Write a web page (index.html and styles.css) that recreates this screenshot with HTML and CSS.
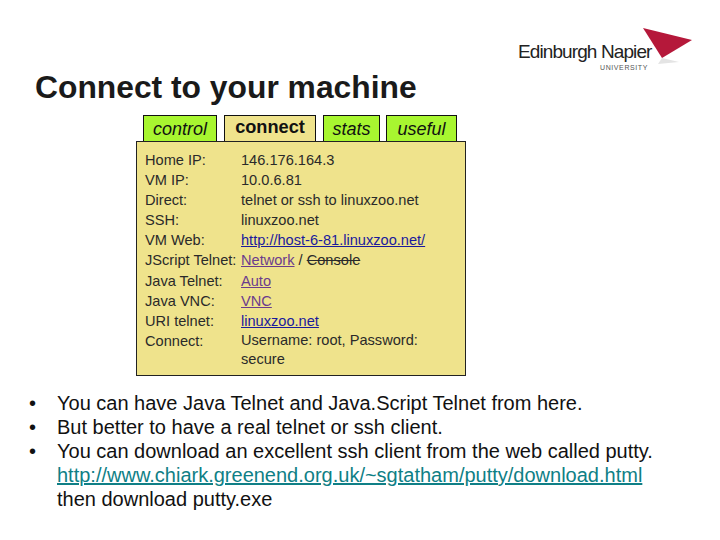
FILE: index.html
```html
<!DOCTYPE html>
<html lang="en">
<head>
<meta charset="utf-8">
<title>Connect to your machine</title>
<link rel="stylesheet" href="styles.css">
</head>
<body>
<div class="slide">
  <header class="head">
    <h1 class="title">Connect to your machine</h1>
    <div class="logo">
      <span class="logo-name">Edinburgh Napier</span>
      <span class="logo-uni">UNIVERSITY</span>
      <svg class="logo-mark" width="50" height="36" viewBox="0 0 50 36" aria-hidden="true">
        <path d="M19 30 L15 36 L36 34 Z" fill="#e4e4e4"/>
        <path d="M0 0 L49 12 L19 30 Z" fill="#b5183a"/>
      </svg>
    </div>
  </header>
  <section class="shot">
    <nav class="tabs">
      <span class="tab tab-control">control</span>
      <span class="tab tab-active">connect</span>
      <span class="tab tab-stats">stats</span>
      <span class="tab tab-useful">useful</span>
    </nav>
    <div class="panel">
      <span>Home IP:</span><span>146.176.164.3</span>
      <span>VM IP:</span><span>10.0.6.81</span>
      <span>Direct:</span><span>telnet or ssh to linuxzoo.net</span>
      <span>SSH:</span><span>linuxzoo.net</span>
      <span>VM Web:</span><span><a class="link" href="#">http://host-6-81.linuxzoo.net/</a></span>
      <span>JScript Telnet:</span><span><a class="visited" href="#">Network</a> / <s>Console</s></span>
      <span>Java Telnet:</span><span><a class="visited" href="#">Auto</a></span>
      <span>Java VNC:</span><span><a class="visited" href="#">VNC</a></span>
      <span>URI telnet:</span><span><a class="link" href="#">linuxzoo.net</a></span>
      <span>Connect:</span><span class="wrap">Username: root, Password: secure</span>
    </div>
  </section>
  <ul class="points">
    <li>You can have Java Telnet and Java.Script Telnet from here.</li>
    <li>But better to have a real telnet or ssh client.</li>
    <li>You can download an excellent ssh client from the web called putty. <a class="teal" href="#">http://www.chiark.greenend.org.uk/~sgtatham/putty/download.html</a> then download putty.exe</li>
  </ul>
</div>
</body>
</html>
```
FILE: styles.css
```css
* { box-sizing: border-box; }
html, body { margin: 0; padding: 0; background: #fff; }
body { font-family: "Liberation Sans", Arial, sans-serif; color: #000; }
.slide { width: 720px; height: 540px; overflow: hidden; display: flex; flex-direction: column; }
.head { display: flex; justify-content: space-between; height: 115px; padding-left: 35px; }
.title { margin: 69px 0 0; font-size: 31.8px; line-height: 36px; font-weight: 700; color: #1a1a1a; }
.logo { position: relative; width: 202px; height: 72px; }
.logo-name { position: absolute; left: 0; top: 40px; font-size: 19px; line-height: 24px; letter-spacing: -0.9px; color: #222; white-space: nowrap; }
.logo-uni { position: absolute; left: 82px; top: 63px; font-size: 7px; line-height: 9px; letter-spacing: 0.6px; color: #555; }
.logo-mark { position: absolute; left: 125px; top: 28px; }
.shot { margin-left: 136px; width: 330px; display: flex; flex-direction: column; }
.tabs { display: flex; height: 26px; padding-left: 7px; }
.tab { display: block; height: 26px; border: 1px solid #111; border-bottom: 0; background: #a8f630; font-style: italic; font-size: 18px; line-height: 26px; text-align: center; color: #111; }
.tab-control { width: 74px; margin-right: 7px; }
.tab-active { width: 92px; margin-right: 7px; background: #efe38c; font-style: normal; font-weight: 700; font-size: 18.2px; line-height: 23px; }
.tab-stats { width: 57px; margin-right: 6px; }
.tab-useful { width: 71px; }
.panel { display: grid; grid-template-columns: 96px 1fr; grid-auto-rows: 20.1px; height: 235px; padding: 8px 8px 0; background: #efe38c; border: 1px solid #222; font-size: 14.6px; line-height: 20.1px; color: #2a2a2a; white-space: nowrap; }
.wrap { white-space: normal; grid-row: span 2; width: 190px; line-height: 19px; }
.link { color: #1a1a9c; }
.visited { color: #6b3c8c; }
.points { margin: 15px 0 0; padding: 0 58px 0 57px; list-style: none; font-size: 20px; line-height: 24px; color: #111; }
.points li { position: relative; }
.points li::before { content: "•"; position: absolute; left: -28px; }
.teal { color: #0f7f86; }
```
